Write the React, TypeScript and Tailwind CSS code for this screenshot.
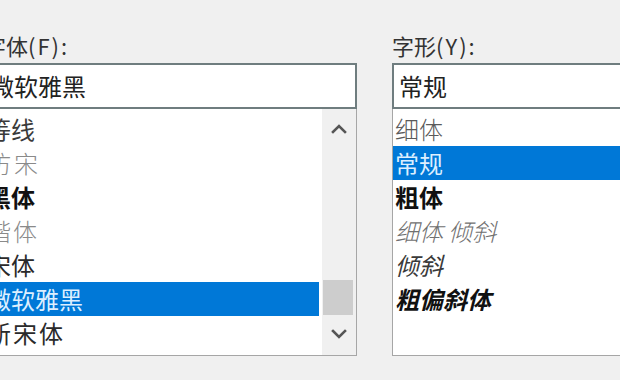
const FONT = '"Noto Sans CJK SC", "Noto Sans", sans-serif';

type Item = { label: string; cls: string };

const fontItems: Item[] = [
  { label: '等线', cls: 'text-[#3a3a3a]' },
  { label: '仿宋', cls: 'text-[#8a8a8a] font-light tracking-[3px]' },
  { label: '黑体', cls: 'text-[#111] font-bold' },
  { label: '楷体', cls: 'text-[#8a8a8a] font-light tracking-[2px]' },
  { label: '宋体', cls: 'text-[#2a2a2a]' },
  { label: '微软雅黑', cls: 'text-[#2a2a2a]' },
  { label: '新宋体', cls: 'text-[#2a2a2a] tracking-[2px]' },
];

const styleItems: Item[] = [
  { label: '细体', cls: 'text-[#5a5a5a] font-light' },
  { label: '常规', cls: 'text-[#2a2a2a]' },
  { label: '粗体', cls: 'text-[#111] font-bold' },
  { label: '细体 倾斜', cls: 'text-[#707070] italic font-light' },
  { label: '倾斜', cls: 'text-[#3a3a3a] italic' },
  { label: '粗偏斜体', cls: 'text-[#111] italic font-bold' },
];

function Chevron({ up }: { up?: boolean }) {
  return (
    <svg width="16" height="10" viewBox="0 0 16 10">
      <polyline
        points={up ? '2,8 8,2 14,8' : '2,2 8,8 14,2'}
        fill="none"
        stroke="#555"
        strokeWidth="2.6"
        strokeLinecap="square"
      />
    </svg>
  );
}

function Row({ item, selected }: { item: Item; selected: boolean }) {
  return (
    <div
      className={`h-[34px] flex items-center pl-[2px] text-[24px] leading-none whitespace-nowrap ${
        selected ? 'bg-[#0078d7]' : ''
      }`}
    >
      <span className={selected ? 'text-[#dcefff]' : item.cls}>{item.label}</span>
    </div>
  );
}

function Label({ main, key2 }: { main: string; key2: string }) {
  return (
    <div className="text-[22px] leading-[22px] text-[#333] whitespace-nowrap">
      {main}
      <span className="tracking-[2px]">{key2}</span>
    </div>
  );
}

export default function App() {
  return (
    <div
      className="w-[620px] h-[380px] bg-[#f0f0f0] overflow-hidden flex items-start gap-[35px]"
      style={{ fontFamily: FONT }}
    >
      {/* 字体 */}
      <div className="ml-[-16px] w-[373px] shrink-0 pt-[34px]">
        <Label main="字体" key2="(F):" />
        <div className="mt-[7px] h-[46px] border-2 border-[#6f7d7f] bg-white flex items-center pl-[4px] text-[24px] leading-none text-[#222]">
          微软雅黑
        </div>
        <div className="h-[247px] border border-[#a6a6a6] border-t-0 bg-white flex">
          <div className="flex-1 pt-[3px] pr-[3px]">
            {fontItems.map((it) => (
              <Row key={it.label} item={it} selected={it.label === '微软雅黑'} />
            ))}
          </div>
          <div className="w-[34px] bg-[#f0f0f0] flex flex-col">
            <div className="h-[40px] flex items-center justify-center">
              <Chevron up />
            </div>
            <div className="h-[131px]" />
            <div className="h-[35px] ml-[1px] w-[30px] bg-[#cdcdcd]" />
            <div className="h-[37px] flex items-center justify-center">
              <Chevron />
            </div>
          </div>
        </div>
      </div>

      {/* 字形 */}
      <div className="w-[260px] shrink-0 pt-[34px]">
        <Label main="字形" key2="(Y):" />
        <div className="mt-[7px] h-[46px] border-2 border-[#6f7d7f] bg-white flex items-center pl-[5px] text-[24px] leading-none text-[#222]">
          常规
        </div>
        <div className="h-[247px] border border-[#a6a6a6] border-t-0 bg-white pt-[3px]">
          {styleItems.map((it) => (
            <Row key={it.label} item={it} selected={it.label === '常规'} />
          ))}
        </div>
      </div>
    </div>
  );
}
